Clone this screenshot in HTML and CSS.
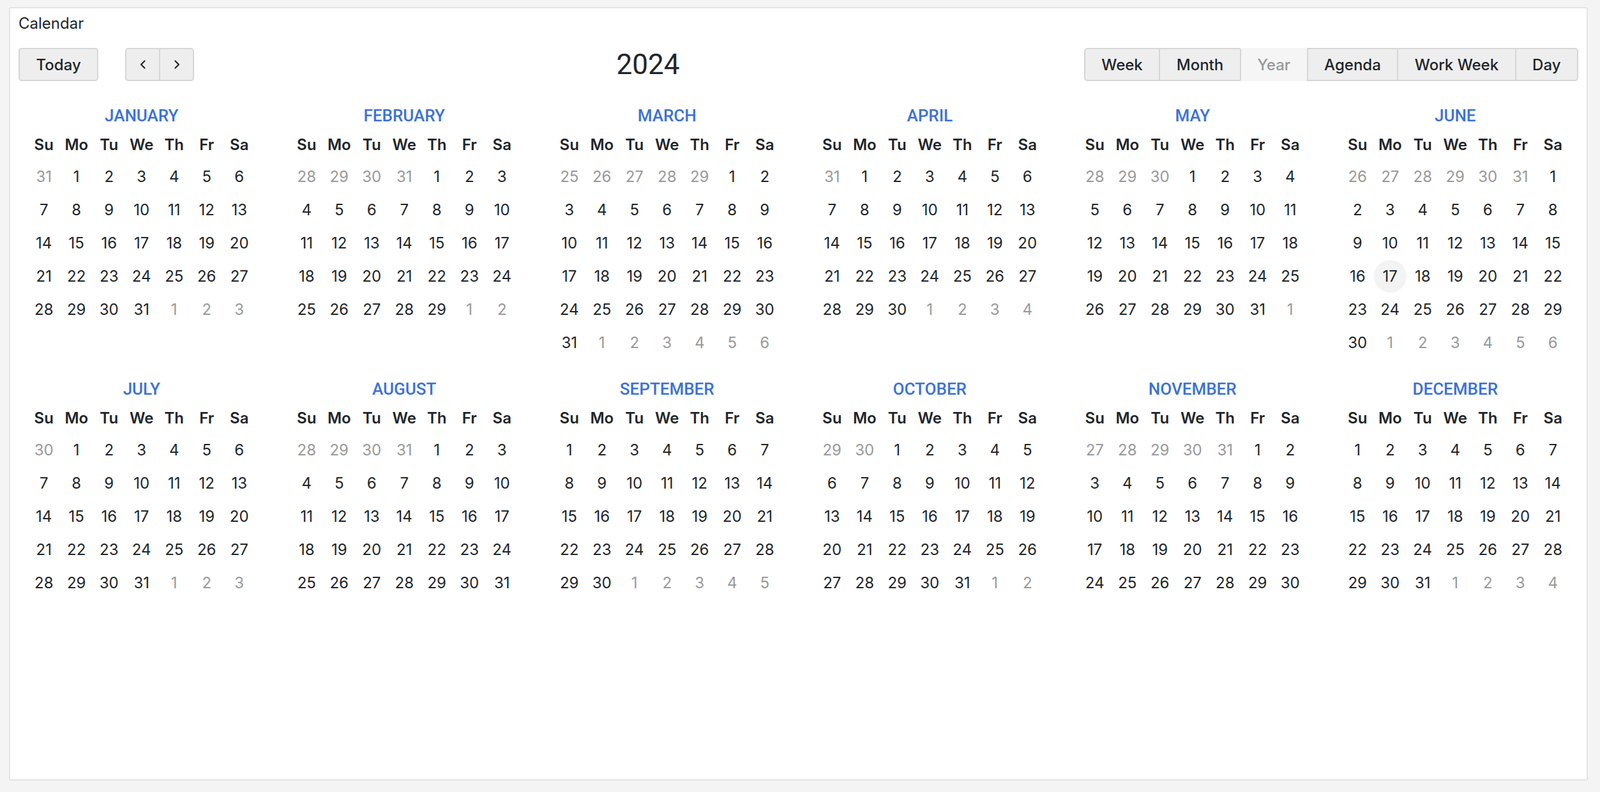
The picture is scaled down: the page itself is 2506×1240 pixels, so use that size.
FILE: index.html
```html
<!DOCTYPE html>
<html lang="en">
<head>
    <meta charset="UTF-8">
    <meta name="viewport" content="width=device-width, initial-scale=1.0">
    <title>Calendar</title>
    <link rel="stylesheet" href="styles.css">
</head>
<body>

    <div class="card">
        <div class="card-title">Calendar</div>

        <div class="toolbar">
            <button class="btn">Today</button>
            <div class="btn-group nav">
                <button class="btn icon" aria-label="Back">
                    <svg width="12" height="14" viewBox="0 0 12 14"><path d="M8.5 1.5 L3 7 L8.5 12.5" fill="none" stroke="#212529" stroke-width="2.2" stroke-linecap="round" stroke-linejoin="round"/></svg>
                </button>
                <button class="btn icon" aria-label="Next">
                    <svg width="12" height="14" viewBox="0 0 12 14"><path d="M3.5 1.5 L9 7 L3.5 12.5" fill="none" stroke="#212529" stroke-width="2.2" stroke-linecap="round" stroke-linejoin="round"/></svg>
                </button>
            </div>
            <div class="toolbar-label">2024</div>
            <div class="btn-group views">
                <button class="btn">Week</button>
                <button class="btn">Month</button>
                <button class="btn active">Year</button>
                <button class="btn">Agenda</button>
                <button class="btn">Work Week</button>
                <button class="btn">Day</button>
            </div>
        </div>

        <div class="year-grid" id="year"></div>
    </div>

    <script>
        const monthNames = ['January', 'February', 'March', 'April', 'May', 'June',
            'July', 'August', 'September', 'October', 'November', 'December'];
        const weekdays = ['Su', 'Mo', 'Tu', 'We', 'Th', 'Fr', 'Sa'];
        const year = 2024;
        const today = new Date(2024, 5, 17);
        const grid = document.getElementById('year');

        monthNames.forEach((name, m) => {
            const month = document.createElement('div');
            month.className = 'month';

            const title = document.createElement('div');
            title.className = 'month-name';
            title.textContent = name;
            month.appendChild(title);

            const days = document.createElement('div');
            days.className = 'days';

            weekdays.forEach(w => {
                const cell = document.createElement('div');
                cell.className = 'weekday';
                cell.textContent = w;
                days.appendChild(cell);
            });

            const first = new Date(year, m, 1);
            const last = new Date(year, m + 1, 0);
            const weeks = Math.ceil((first.getDay() + last.getDate()) / 7);

            for (let i = 0; i < weeks * 7; i++) {
                const d = new Date(year, m, 1 - first.getDay() + i);
                const cell = document.createElement('div');
                cell.className = 'day';
                if (d.getMonth() !== m) cell.classList.add('off');
                if (d.getTime() === today.getTime() && d.getMonth() === m) cell.classList.add('today');
                const num = document.createElement('span');
                num.textContent = d.getDate();
                cell.appendChild(num);
                days.appendChild(cell);
            }

            month.appendChild(days);
            grid.appendChild(month);
        });
    </script>

</body>
</html>
```

FILE: styles.css
```css
body {
    margin: 0;
    padding: 11px 19px 18px 14px;
    height: 100vh;
    box-sizing: border-box;
    background-color: #f3f4f3;
    font-family: Inter, "Liberation Sans", sans-serif;
    color: #212529;
}
.card {
    height: 100%;
    box-sizing: border-box;
    background-color: #fff;
    border: 2px solid #e3e4e3;
    border-radius: 3px;
    padding-top: 9px;
}
.card-title {
    padding: 0 13px;
    font-size: 24px;
    line-height: 30px;
}
.toolbar {
    display: flex;
    align-items: center;
    margin-top: 23px;
    padding: 0 13px;
}
.btn {
    height: 52px;
    box-sizing: border-box;
    padding: 0 25.5px;
    font-family: inherit;
    font-size: 24px;
    font-weight: 500;
    color: #212529;
    background-color: #eee;
    border: 2px solid #d6d6d6;
    border-radius: 5px;
    cursor: pointer;
}
.btn-group {
    display: flex;
}
.btn-group .btn {
    border-radius: 0;
    margin-left: -2px;
}
.btn-group .btn:first-child {
    margin-left: 0;
    border-radius: 5px 0 0 5px;
}
.btn-group .btn:last-child {
    border-radius: 0 5px 5px 0;
}
.nav {
    margin-left: 42px;
}
.btn.icon {
    width: 55px;
    padding: 0;
    display: flex;
    align-items: center;
    justify-content: center;
}
.btn.active {
    background-color: #f4f5f4;
    border-top-color: #f4f5f4;
    border-bottom-color: #f4f5f4;
    color: #999;
}
.toolbar-label {
    flex: 1;
    text-align: center;
    padding-left: 28px;
    font-family: Roboto, "Liberation Sans", sans-serif;
    font-size: 44px;
    color: #212529;
}
.year-grid {
    display: grid;
    grid-template-columns: repeat(6, 1fr);
    row-gap: 27px;
    margin-top: 34px;
}
.month {
    display: flex;
    flex-direction: column;
    align-items: center;
}
.month-name {
    height: 41px;
    line-height: 41px;
    font-family: Roboto, "Liberation Sans", sans-serif;
    font-size: 26px;
    font-weight: 500;
    text-transform: uppercase;
    color: #3b71d9;
}
.days {
    display: grid;
    grid-template-columns: repeat(7, 51px);
    grid-template-rows: 48px;
    grid-auto-rows: 52px;
    font-size: 24px;
}
.weekday, .day {
    display: flex;
    align-items: center;
    justify-content: center;
}
.weekday {
    font-weight: 600;
}
.day span {
    width: 51px;
    height: 51px;
    display: flex;
    align-items: center;
    justify-content: center;
    border-radius: 50%;
}
.day.off {
    color: #999;
}
.day.today span {
    background-color: #f2f3f2;
}
```
